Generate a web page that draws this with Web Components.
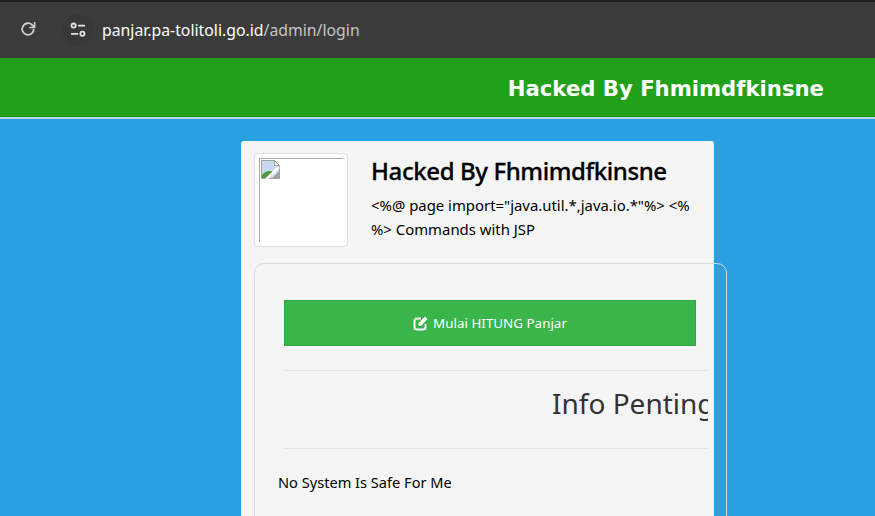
<!DOCTYPE html>
<html>
<head>
<meta charset="utf-8">
<title>Hacked By Fhmimdfkinsne</title>
<style>
    html, body { margin: 0; height: 100%; overflow: hidden; background: #29a0e0; }
    body { display: flex; flex-direction: column; font-family: "Noto Sans", sans-serif; }
</style>
</head>
<body>
<browser-bar url-host="panjar.pa-tolitoli.go.id" url-path="/admin/login"></browser-bar>
<site-header>Hacked By Fhmimdfkinsne</site-header>
<page-main>
    <login-card>
        <broken-logo slot="logo"></broken-logo>
        <span slot="title">Hacked By Fhmimdfkinsne</span>
        <span slot="subtitle">&lt;%@ page import="java.util.*,java.io.*"%&gt; &lt;% %&gt; Commands with JSP</span>
        <inner-panel>
            <start-button>Mulai HITUNG Panjar</start-button>
            <info-block heading="Info Penting">No System Is Safe For Me</info-block>
        </inner-panel>
    </login-card>
</page-main>

<script>
class BrowserBar extends HTMLElement
{
    constructor()
    {
        super()
        const shadow = this.attachShadow({mode:"open"})
        shadow.innerHTML = `
        <style>
            :host { display: flex; align-items: center; height: 56px; background: #3b3b3b; border-top: 2px solid #1f1f1f; padding-left: 20px; color: #fff; flex: none; }
            .reload { width: 16px; height: 16px; margin-right: 26px; margin-bottom: 2px; }
            .tune { width: 32px; height: 32px; border-radius: 50%; background: #383838; display: flex; align-items: center; justify-content: center; margin-right: 8px; margin-bottom: 1px; }
            .url { font: 15.8px "Noto Sans", sans-serif; color: #fff; }
            .url span { color: #c4c7c5; }
        </style>
        <svg class="reload" viewBox="0 0 16 16" fill="none" stroke="#d0d0d0" stroke-width="1.8"><path d="M13.800 8a5.800 5.800 0 1 1-1.700-4.100L14 5.800"/><path d="M14.600 1v5.400H9.400" stroke-width="1.500"/></svg>
        <div class="tune">
            <svg width="16" height="16" viewBox="0 0 16 16" fill="none" stroke="#e3e3e3" stroke-width="1.800"><circle cx="3.600" cy="3.600" r="2.100"/><path d="M8 3.600h7M1 11.800h7"/><circle cx="12.400" cy="11.800" r="2.100"/></svg>
        </div>
        <div class="url">${this.getAttribute("url-host")}<span>${this.getAttribute("url-path")}</span></div>`
    }
}

class SiteHeader extends HTMLElement
{
    constructor()
    {
        super()
        const shadow = this.attachShadow({mode:"open"})
        shadow.innerHTML = `
        <style>
            :host { display: flex; align-items: center; justify-content: flex-end; flex: none; box-sizing: border-box; height: 59px; background: #21a11a; border-bottom: 1px solid #188f12; box-shadow: 0 2px 0 #b9dcf0; padding: 3px 51px 0 0; color: #fff; font: bold 21.2px "DejaVu Sans", Verdana, sans-serif; }
        </style>
        <slot></slot>`
    }
}

class PageMain extends HTMLElement
{
    constructor()
    {
        super()
        const shadow = this.attachShadow({mode:"open"})
        shadow.innerHTML = `
        <style>
            :host { display: block; flex: 1; min-height: 0; overflow: hidden; padding: 24px 0 0 241px; }
        </style>
        <slot></slot>`
    }
}

class LoginCard extends HTMLElement
{
    constructor()
    {
        super()
        const shadow = this.attachShadow({mode:"open"})
        shadow.innerHTML = `
        <style>
            :host { display: block; box-sizing: border-box; width: 473px; height: 500px; background: #f5f5f5; border-radius: 3px; padding: 12px 0 0 13px; }
            .top { display: flex; gap: 23px; height: 94px; margin-bottom: 16px; }
            .text { color: #000; }
            .title { font-size: 24px; font-weight: 500; line-height: 36px; margin-bottom: 4px; letter-spacing: -.4px; -webkit-text-stroke: .3px #000; }
            .subtitle { font-size: 14.9px; line-height: 24px; width: 330px; }
        </style>
        <div class="top">
            <slot name="logo"></slot>
            <div class="text">
                <div class="title"><slot name="title"></slot></div>
                <div class="subtitle"><slot name="subtitle"></slot></div>
            </div>
        </div>
        <slot></slot>`
    }
}

class BrokenLogo extends HTMLElement
{
    constructor()
    {
        super()
        const shadow = this.attachShadow({mode:"open"})
        shadow.innerHTML = `
        <style>
            :host { display: block; box-sizing: border-box; width: 94px; height: 94px; flex: none; background: #fff; border: 1px solid #ddd; border-radius: 4px; padding: 4px; }
            .img { box-sizing: border-box; width: 84px; height: 84px; border-top: 1px solid #a9a9a9; border-left: 1px solid #a9a9a9; padding: 1px; }
            svg { display: block; }
        </style>
        <div class="img">
            <svg width="19" height="19" viewBox="0 0 19 19">
                <path d="M.5.5h13l5 5v13H.5z" fill="#c9d9f2" stroke="#a0a0a0"/>
                <path d="M13.500.5v5h5z" fill="#fff" stroke="#a0a0a0"/>
                <path d="M1 18v-3c3-4 8-5 11-3l-6 6z" fill="#4f9a3a"/>
                <path d="M5 19.500L18 7" stroke="#fff" stroke-width="2.600"/>
                <path d="M11 18.500l7.500-7.500v7.500z" fill="#a0a0a0"/>
            </svg>
        </div>`
    }
}

class InnerPanel extends HTMLElement
{
    constructor()
    {
        super()
        const shadow = this.attachShadow({mode:"open"})
        shadow.innerHTML = `
        <style>
            :host { display: block; box-sizing: border-box; width: 473px; height: 300px; border: 1px solid #d9d9d9; border-radius: 10px; padding: 36px 18px 0 24px; }
        </style>
        <slot></slot>`
    }
}

class StartButton extends HTMLElement
{
    constructor()
    {
        super()
        const shadow = this.attachShadow({mode:"open"})
        shadow.innerHTML = `
        <style>
            :host { display: flex; align-items: center; justify-content: center; gap: 4px; box-sizing: border-box; margin-left: 5px; width: 412px; height: 46px; background: #39b54a; border: 1px solid #2fa83f; color: #fff; font-size: 13.4px; padding-bottom: 1px; }
        </style>
        <svg width="16" height="16" viewBox="0 0 16 16" fill="none" stroke="#fff" stroke-width="2"><path d="M12.500 9v3a2.500 2.500 0 0 1-2.500 2.500H4A2.500 2.500 0 0 1 1.500 12V6A2.500 2.500 0 0 1 4 3.500h4"/><path d="M6 10.500V8l6-6 2 2-6 6.500z" fill="#fff" stroke-width="1"/></svg>
        <slot></slot>`
    }
}

class InfoBlock extends HTMLElement
{
    constructor()
    {
        super()
        const shadow = this.attachShadow({mode:"open"})
        shadow.innerHTML = `
        <style>
            :host { display: block; }
            .clip { width: 424px; margin-left: 5px; overflow: hidden; margin-top: 24px; box-sizing: border-box; height: 79px; border-top: 1px solid #e4e4e4; border-bottom: 1px solid #e4e4e4; }
            h2 { margin: 0; font-size: 28px; font-weight: 400; color: #333; white-space: nowrap; line-height: 64px; padding-left: 268px; }
            .body { color: #000; font-size: 14.6px; margin-top: 23px; margin-left: -1px; line-height: 20px; }
        </style>
        <div class="clip"><h2>${this.getAttribute("heading")}</h2></div>
        <div class="body"><slot></slot></div>`
    }
}

customElements.define("browser-bar", BrowserBar)
customElements.define("site-header", SiteHeader)
customElements.define("page-main", PageMain)
customElements.define("login-card", LoginCard)
customElements.define("broken-logo", BrokenLogo)
customElements.define("inner-panel", InnerPanel)
customElements.define("start-button", StartButton)
customElements.define("info-block", InfoBlock)
</script>
</body>
</html>
